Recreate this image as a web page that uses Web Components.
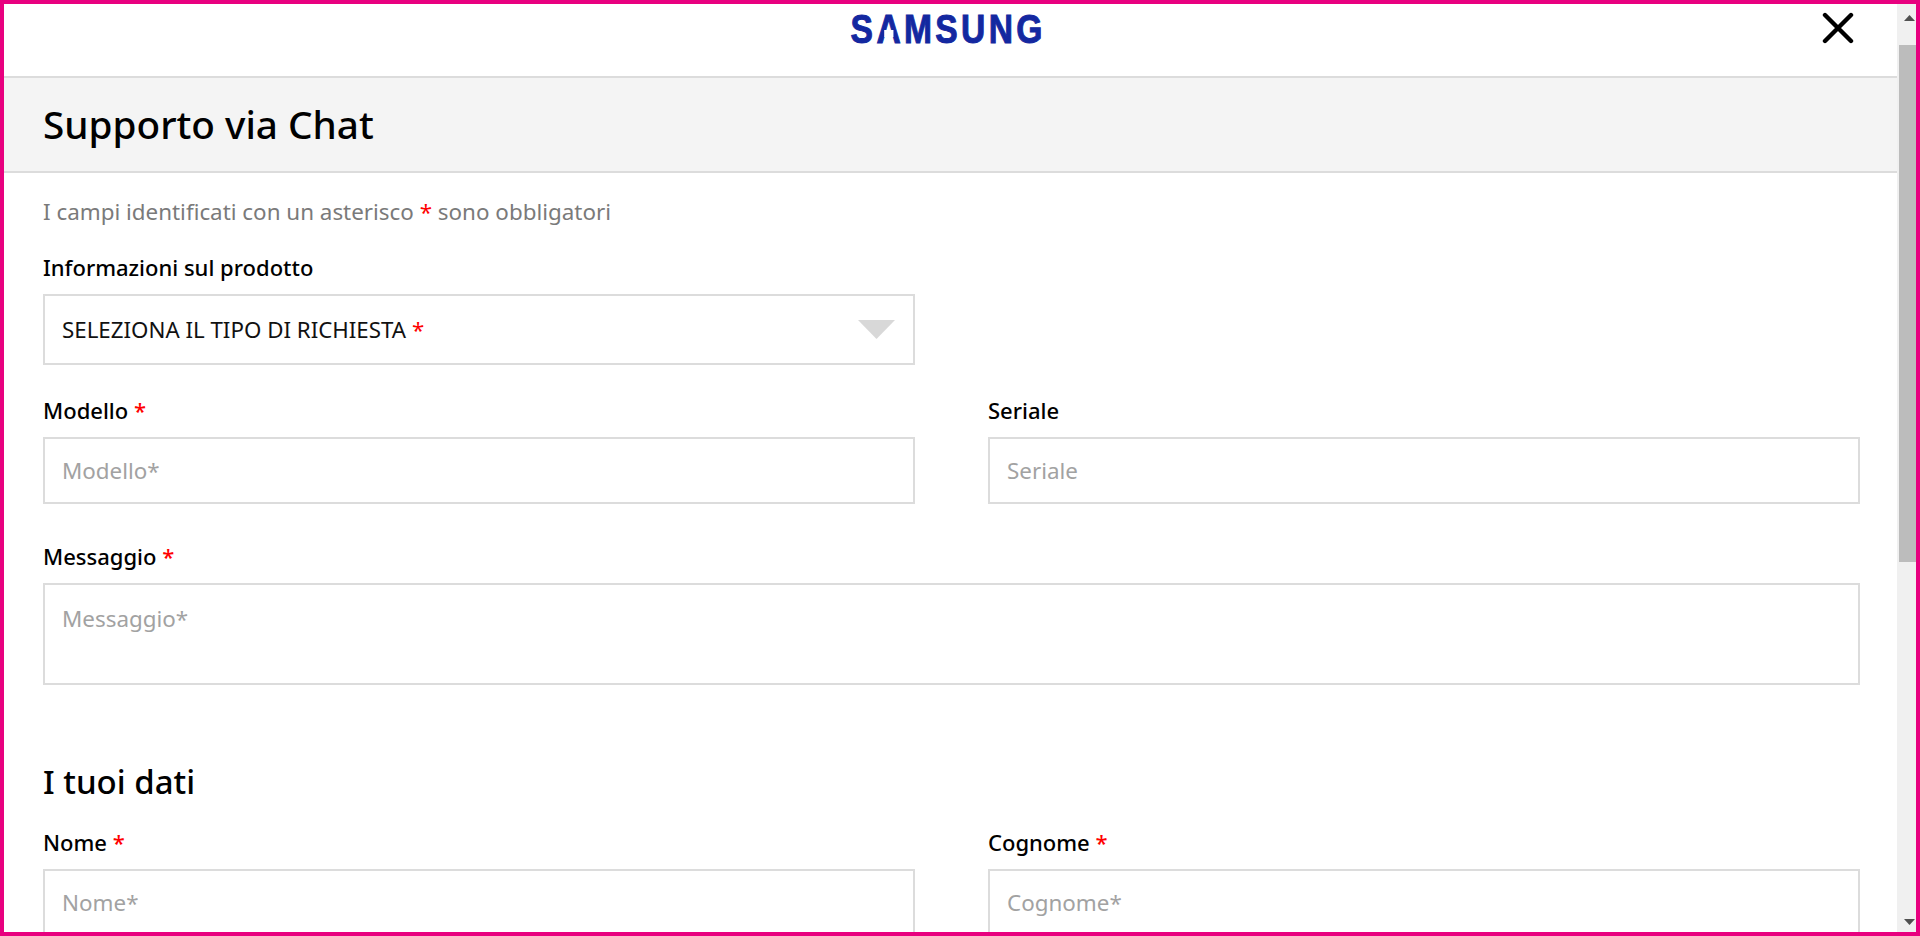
<!DOCTYPE html>
<html lang="it"><head><meta charset="utf-8"><title>Supporto via Chat</title>
<style>
html,body{margin:0;height:100%;overflow:hidden;background:#fff}
body{font-family:"Noto Sans","Open Sans",sans-serif;color:#000}
</style></head><body>
<template id="t-shell"><style>
:host{display:flex;box-sizing:border-box;height:936px;border:4px solid #e8007f;overflow:hidden;background:#fff}
.main{flex:1;min-width:0;overflow:hidden}
</style><div class="main"><slot></slot></div><slot name="bar"></slot></template>

<template id="t-scroll"><style>
:host{display:flex;flex-direction:column;width:19px;flex:none;background:#f0f0f0}
.up,.down{display:flex;align-items:center;justify-content:center;flex:none;padding-left:5px}
.up{height:28px}.down{height:20px}
.thumb{height:517px;margin-top:13px;background:#bcbcbc;margin-left:2px;flex:none}
.sp{flex:1}
svg{display:block}
</style><div class="up"><svg width="11" height="6" viewBox="0 0 11 6"><path d="M5.500 0 11 6H0z" fill="#505050"/></svg></div><div class="thumb"></div><div class="sp"></div><div class="down"><svg width="11" height="6" viewBox="0 0 11 6"><path d="M0 0h11L5.500 6z" fill="#505050"/></svg></div></template>

<template id="t-top"><style>
:host{display:flex;position:relative;height:72px;justify-content:center;border-bottom:2px solid #dcdcdc;background:#fff}
.logo{font:700 40px/40px "Liberation Sans",sans-serif;color:#1428a0;letter-spacing:4px;transform:scaleX(.84);margin:5px 5px 0 0;height:40px;-webkit-text-stroke:1px #1428a0}
.a{position:relative}
.a::after{content:"";position:absolute;left:9px;right:13px;top:23px;height:7px;background:#fff}
.x{position:absolute;right:43px;top:8px;display:block}
</style><div class="logo">S<span class="a">A</span>MSUNG</div>
<svg class="x" width="32" height="32" viewBox="0 0 32 32"><path d="M3 3 29 29M29 3 3 29" stroke="#000" stroke-width="4.400" stroke-linecap="round" fill="none"/></svg></template>

<template id="t-band"><style>
:host{display:flex;align-items:center;box-sizing:border-box;height:95px;padding:0 39px;background:#f4f4f4;border-bottom:2px solid #dcdcdc}
h1{margin:0;font:500 38.700px/1 "Noto Sans",sans-serif;color:#000}
</style><h1><slot></slot></h1></template>

<template id="t-form"><style>
:host{display:flex;flex-direction:column;padding:26px 37px 0 39px}
</style><slot></slot></template>

<template id="t-note"><style>
:host{display:block;font-size:22.400px;line-height:26px;color:#7a7a7a}
</style><slot></slot></template>

<template id="t-star"><style>
:host{display:inline;color:#f00}
</style>*</template>

<template id="t-row"><style>
:host{display:grid;grid-template-columns:872px 872px;column-gap:73px}
</style><slot></slot></template>

<template id="t-field"><style>
:host{display:flex;flex-direction:column}
.l{font-size:22px;font-weight:500;line-height:26px;height:26px;margin-bottom:14px;color:#000}
</style><div class="l"><slot name="label"></slot></div><slot></slot></template>

<template id="t-box"><style>
:host{display:flex;box-sizing:border-box;align-items:var(--al,center);height:var(--h,67px);padding:var(--pad,0 17px);border:2px solid #dcdcdc;background:#fff;font-size:22.400px;line-height:26px;color:#a2a2a2}
</style><slot></slot></template>

<template id="t-select"><style>
:host{display:flex;box-sizing:border-box;align-items:center;justify-content:space-between;height:71px;padding:0 18px 0 17px;border:2px solid #dcdcdc;background:#fff;font-size:22.300px;color:#111}
svg{display:block}
</style><span><slot></slot></span><svg width="37" height="19" viewBox="0 0 37 19"><path d="M0 0h37L18.500 19z" fill="#d8d8d8"/></svg></template>

<template id="t-h2"><style>
:host{display:block;font-size:33px;font-weight:500;line-height:40px;color:#000}
</style><slot></slot></template>

<script>
const defs={'x-shell':'t-shell','x-scroll':'t-scroll','x-top':'t-top','x-band':'t-band','x-form':'t-form','x-note':'t-note','x-star':'t-star','x-row':'t-row','x-field':'t-field','x-box':'t-box','x-select':'t-select','x-h2':'t-h2'};
for(const [n,id] of Object.entries(defs)){
  customElements.define(n,class extends HTMLElement{constructor(){super();this.attachShadow({mode:'open'}).appendChild(document.getElementById(id).content.cloneNode(true))}});
}
</script>
<x-shell>
  <x-top></x-top>
  <x-band>Supporto via Chat</x-band>
  <x-form>
    <x-note>I campi identificati con un asterisco <x-star></x-star> sono obbligatori</x-note>
    <x-field style="margin-top:29px"><span slot="label">Informazioni sul prodotto</span>
      <x-select style="width:872px">SELEZIONA IL TIPO DI RICHIESTA <x-star></x-star></x-select></x-field>
    <x-row style="margin-top:32px">
      <x-field><span slot="label">Modello <x-star></x-star></span><x-box>Modello*</x-box></x-field>
      <x-field><span slot="label">Seriale</span><x-box>Seriale</x-box></x-field>
    </x-row>
    <x-field style="margin-top:39px"><span slot="label">Messaggio <x-star></x-star></span>
      <x-box style="--h:102px;--al:flex-start;--pad:21px 17px">Messaggio*</x-box></x-field>
    <x-h2 style="margin-top:77px">I tuoi dati</x-h2>
    <x-row style="margin-top:27px">
      <x-field><span slot="label">Nome <x-star></x-star></span><x-box>Nome*</x-box></x-field>
      <x-field><span slot="label">Cognome <x-star></x-star></span><x-box>Cognome*</x-box></x-field>
    </x-row>
  </x-form>
  <x-scroll slot="bar"></x-scroll>
</x-shell>
</body></html>
